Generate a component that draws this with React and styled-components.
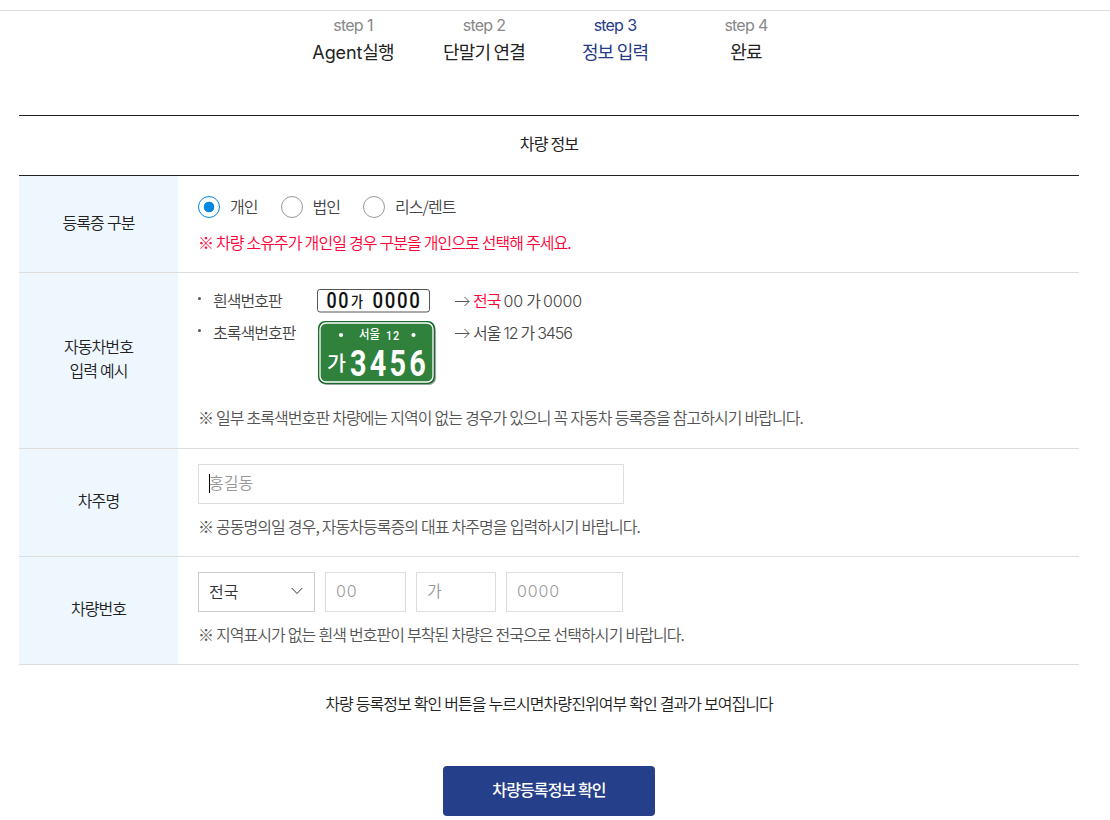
import React, { useState } from 'react';
import styled, { createGlobalStyle } from 'styled-components';

const steps = [
  { no: 1, latin: 'Agent', name: '실행' },
  { no: 2, name: '단말기 연결' },
  { no: 3, name: '정보 입력', active: true },
  { no: 4, name: '완료' },
];

const ownerTypes = ['개인', '법인', '리스/렌트'];

const WhitePlate = () => (
  <svg width="116" height="26" viewBox="0 0 116 26">
    <rect x="1.5" y="1.5" width="112" height="22.5" rx="2.5" fill="#fff" stroke="#555" />
    <PlateText x="10.500" y="20" fontSize="22.5" textLength="23.500" $spacing={2}>00</PlateText>
    <PlateText x="35" y="18.5" fontSize="14.500" textLength="12">가</PlateText>
    <PlateText x="56.500" y="20" fontSize="22.5" textLength="49" $spacing={2}>0000</PlateText>
  </svg>
);

const GreenPlate = () => (
  <svg width="122" height="66" viewBox="0 0 122 66">
    <rect x="4" y="3" width="116" height="62" rx="7" fill="#9aa59b" />
    <rect x="2" y="1" width="117" height="63" rx="7" fill="#1d6a2c" />
    <rect x="4" y="3" width="113" height="59" rx="6" fill="#2f813c" stroke="#fff" strokeWidth="1.3" />
    <circle cx="25" cy="15" r="2.1" fill="#fff" />
    <circle cx="97.500" cy="15" r="2.1" fill="#fff" />
    <PlateText x="43" y="19" fontSize="12" textLength="21" $light>서울</PlateText>
    <PlateText x="70" y="19.500" fontSize="13" textLength="14" $light $spacing={1}>12</PlateText>
    <PlateText x="11" y="50.500" fontSize="20" textLength="19" $light>가</PlateText>
    <PlateText x="34" y="56" fontSize="36" textLength="79" $light $heavy $spacing={4}>3456</PlateText>
  </svg>
);

const App = () => {
  const [owner, setOwner] = useState('개인');

  return (
    <>
      <GlobalStyle />
      <Page>
        <Steps>
          {steps.map((step) => (
            <Step key={step.no} $active={step.active}>
              <StepNo $active={step.active}>step {step.no}</StepNo>
              <StepName>
                {step.latin && <StepLatin>{step.latin}</StepLatin>}
                {step.name}
              </StepName>
            </Step>
          ))}
        </Steps>

        <Table>
          <Caption>차량 정보</Caption>
          <Row $height={97}>
            <Label $lift={4}>등록증 구분</Label>
            <Cell>
              <RadioGroup>
                {ownerTypes.map((type) => (
                  <RadioLabel key={type} onClick={() => setOwner(type)}>
                    <Radio $checked={owner === type} />
                    <RadioText>{type}</RadioText>
                  </RadioLabel>
                ))}
              </RadioGroup>
              <Note $warn>※ 차량 소유주가 개인일 경우 구분을 개인으로 선택해 주세요.</Note>
            </Cell>
          </Row>
          <Row $height={176}>
            <Label>
              자동차번호
              <br />
              입력 예시
            </Label>
            <Cell>
              <Example $height={32}>
                <ExampleName>흰색번호판</ExampleName>
                <PlateBox><WhitePlate /></PlateBox>
                <ExampleValue>
                  <Arrow />
                  <Red>전국</Red> <Latin>00</Latin> 가 <Latin>0000</Latin>
                </ExampleValue>
              </Example>
              <Example $height={78}>
                <ExampleName>초록색번호판</ExampleName>
                <PlateBox><GreenPlate /></PlateBox>
                <ExampleValue>
                  <Arrow />
                  서울 <Latin $tight>12</Latin> 가 <Latin $tight>3456</Latin>
                </ExampleValue>
              </Example>
              <Note>※ 일부 초록색번호판 차량에는 지역이 없는 경우가 있으니 꼭 자동차 등록증을 참고하시기 바랍니다.</Note>
            </Cell>
          </Row>
          <Row $height={108}>
            <Label>차주명</Label>
            <Cell>
              <Field $width={426}>
                <Caret />
                홍길동
              </Field>
              <FieldNote>※ 공동명의일 경우, 자동차등록증의 대표 차주명을 입력하시기 바랍니다.</FieldNote>
            </Cell>
          </Row>
          <Row $height={108}>
            <Label>차량번호</Label>
            <Cell>
              <FieldRow>
                <Select>
                  전국
                  <Chevron viewBox="0 0 12 8">
                    <path d="M0.700 1L6 6.500L11.300 1" fill="none" stroke="#333" />
                  </Chevron>
                </Select>
                <Field $width={81}><FieldLatin>00</FieldLatin></Field>
                <Field $width={80}>가</Field>
                <Field $width={117}><FieldLatin>0000</FieldLatin></Field>
              </FieldRow>
              <FieldNote>※ 지역표시가 없는 흰색 번호판이 부착된 차량은 전국으로 선택하시기 바랍니다.</FieldNote>
            </Cell>
          </Row>
        </Table>

        <Guide>차량 등록정보 확인 버튼을 누르시면차량진위여부 확인 결과가 보여집니다</Guide>
        <SubmitButton type="button">차량등록정보 확인</SubmitButton>
      </Page>
    </>
  );
};

const Arrow = () => (
  <ArrowIcon viewBox="0 0 15 11">
    <path d="M0 5.500H14M9.500 1L14 5.500L9.500 10" fill="none" stroke="#555" />
  </ArrowIcon>
);

const GlobalStyle = createGlobalStyle`
  *,
  *::before {
    box-sizing: border-box;
  }

  body {
    margin: 0;
    background: #fff;
    color: #222;
    font-family: 'Noto Sans CJK KR', sans-serif;
    font-size: 16px;
    font-weight: 350;
    line-height: 24px;
    letter-spacing: -0.96px;
    word-spacing: 0.4px;
  }
`;

const Page = styled.div`
  display: flex;
  flex-direction: column;
  align-items: center;
  width: 1110px;
  height: 820px;
  padding-right: 12px;
  overflow: hidden;

  &::before {
    content: '';
    width: 1110px;
    height: 11px;
    margin-right: -12px;
    flex-shrink: 0;
    border-bottom: 1px solid #ddd;
  }
`;

const Steps = styled.div`
  display: flex;
  height: 104px;
  flex-shrink: 0;
  margin-left: 1px;
`;

const Step = styled.div`
  width: 131px;
  padding-top: 2px;
  text-align: center;
  color: ${({ $active }) => ($active ? '#263c87' : '#222')};
`;

const StepNo = styled.div`
  font-family: Inter, sans-serif;
  font-weight: 400;
  letter-spacing: -0.8px;
  color: ${({ $active }) => ($active ? '#263c87' : '#888')};
`;

const StepName = styled.div`
  margin-top: 2px;
  font-size: 18px;
  font-weight: 400;
  letter-spacing: -0.9px;
`;

const StepLatin = styled.span`
  font-family: Inter, sans-serif;
  letter-spacing: -0.1px;
`;

const Table = styled.div`
  width: 1060px;
  flex-shrink: 0;
  border-top: 1px solid #222;
`;

const Caption = styled.div`
  height: 60px;
  padding-top: 15px;
  border-bottom: 1px solid #222;
  font-weight: 400;
  letter-spacing: -0.9px;
  text-align: center;
`;

const Row = styled.div`
  display: flex;
  height: ${({ $height }) => $height}px;
  border-bottom: 1px solid #ddd;
`;

const Label = styled.div`
  display: flex;
  align-items: center;
  justify-content: center;
  width: 159px;
  padding-bottom: ${({ $lift = 6 }) => $lift}px;
  background: #eef7fe;
  text-align: center;
`;

const Cell = styled.div`
  flex: 1;
  padding: 15px 20px 0;
  color: #444;
`;

const RadioGroup = styled.div`
  display: flex;
  gap: 23px;
  height: 32px;
  align-items: center;
`;

const RadioLabel = styled.label`
  display: flex;
  align-items: center;
  gap: 10px;
`;

const RadioText = styled.span`
  padding-bottom: 2px;
`;

const Radio = styled.span`
  width: 22px;
  height: 22px;
  border: 1px solid ${({ $checked }) => ($checked ? '#0089e1' : '#999')};
  border-radius: 50%;
  background: ${({ $checked }) =>
    $checked ? 'radial-gradient(circle, #0089e1 5px, #fff 5.6px)' : '#fff'};
`;

const Note = styled.p`
  margin: 7px 0 0;
  color: ${({ $warn }) => ($warn ? '#ff0036' : '#555')};
  white-space: nowrap;
`;

const FieldNote = styled(Note)`
  margin-top: 10px;
`;

const Example = styled.div`
  display: flex;
  height: ${({ $height }) => $height}px;
`;

const ExampleName = styled.div`
  width: 118px;

  &::before {
    content: '';
    display: inline-block;
    width: 3px;
    height: 3px;
    margin-right: 12px;
    border-radius: 50%;
    background: #555;
    vertical-align: 7px;
  }
`;

const PlateBox = styled.div`
  width: 139px;

  svg {
    display: block;
    overflow: visible;
  }
`;

const PlateText = styled.text.attrs({ lengthAdjust: 'spacingAndGlyphs' })`
  fill: ${({ $light }) => ($light ? '#fff' : '#111')};
  font-family: Roboto, 'Noto Sans CJK KR', sans-serif;
  font-weight: ${({ $heavy }) => ($heavy ? 700 : 500)};
  letter-spacing: ${({ $spacing = 0 }) => $spacing}px;
`;

const ExampleValue = styled.div`
  white-space: nowrap;
`;

const ArrowIcon = styled.svg`
  width: 15px;
  height: 11px;
  margin-right: 3px;
`;

const Red = styled.span`
  color: #ff0036;
`;

const Latin = styled.span`
  font-family: Inter, sans-serif;
  font-weight: 300;
  letter-spacing: ${({ $tight }) => ($tight ? '-1.1px' : '-0.1px')};
`;

const FieldRow = styled.div`
  display: flex;
  gap: 10px;
`;

const Field = styled.div`
  display: flex;
  align-items: center;
  width: ${({ $width }) => $width}px;
  height: 40px;
  padding: 0 10px 4px;
  border: 1px solid #ddd;
  color: #999;
  letter-spacing: 0;
`;

const FieldLatin = styled.span`
  padding-top: 2px;
  font-family: Inter, sans-serif;
  font-weight: 300;
  letter-spacing: 0.9px;
`;

const Caret = styled.span`
  width: 1px;
  height: 19px;
  margin: 2px -1px 0 0;
  background: #000;
`;

const Select = styled(Field)`
  width: 117px;
  padding-bottom: 2px;
  justify-content: space-between;
  border-color: #ccc;
  color: #333;
`;

const Chevron = styled.svg`
  width: 12px;
  height: 8px;
  margin-right: 1px;
`;

const Guide = styled.p`
  margin: 26px 0 0;
`;

const SubmitButton = styled.button`
  flex-shrink: 0;
  width: 212px;
  height: 50px;
  margin-top: 51px;
  padding: 0 0 4px;
  border: 0;
  border-radius: 4px;
  background: #263f8a;
  color: #fff;
  font: inherit;
  font-weight: 500;
  letter-spacing: -0.9px;
`;

export default App;
